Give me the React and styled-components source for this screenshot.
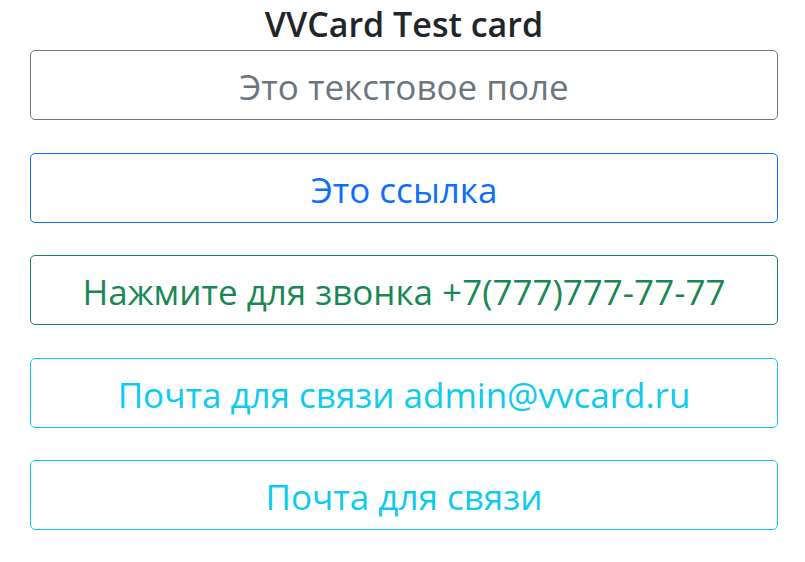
import React from 'react';
import styled, { createGlobalStyle } from 'styled-components';

const GlobalStyle = createGlobalStyle`
  body {
    margin: 0;
    background: #fff;
    font-family: "Open Sans", "Noto Sans", sans-serif;
    color: #212529;
  }
`;

const Card = styled.div`
  padding: 0 27px 0 30px;
`;

const Title = styled.h1`
  margin: 0 0 5px;
  padding-top: 4px;
  font-size: 34px;
  font-weight: 600;
  line-height: 41px;
  text-align: center;
  color: #212529;
`;

const List = styled.div`
  display: flex;
  flex-direction: column;
  gap: 32.5px;
`;

const colors = {
  secondary: '#6c757d',
  primary: '#0d6efd',
  success: '#198754',
  info: '#0dcaf0',
};

const OutlineButton = styled.a`
  display: block;
  box-sizing: border-box;
  height: 70px;
  padding: 12px 16px 8px;
  border: 1px solid ${p => colors[p.$variant]};
  border-radius: 5px;
  color: ${p => colors[p.$variant]};
  font-size: 35px;
  line-height: 48px;
  text-align: center;
  text-decoration: none;
  white-space: nowrap;
`;

const items = [
  { variant: 'secondary', text: 'Это текстовое поле' },
  { variant: 'primary', text: 'Это ссылка' },
  { variant: 'success', text: 'Нажмите для звонка +7(777)777-77-77' },
  { variant: 'info', text: 'Почта для связи admin@vvcard.ru' },
  { variant: 'info', text: 'Почта для связи' },
];

export default function App() {
  return (
    <>
      <GlobalStyle />
      <Card>
        <Title>VVCard Test card</Title>
        <List>
          {items.map((it, i) => (
            <OutlineButton key={i} $variant={it.variant}>
              {it.text}
            </OutlineButton>
          ))}
        </List>
      </Card>
    </>
  );
}
